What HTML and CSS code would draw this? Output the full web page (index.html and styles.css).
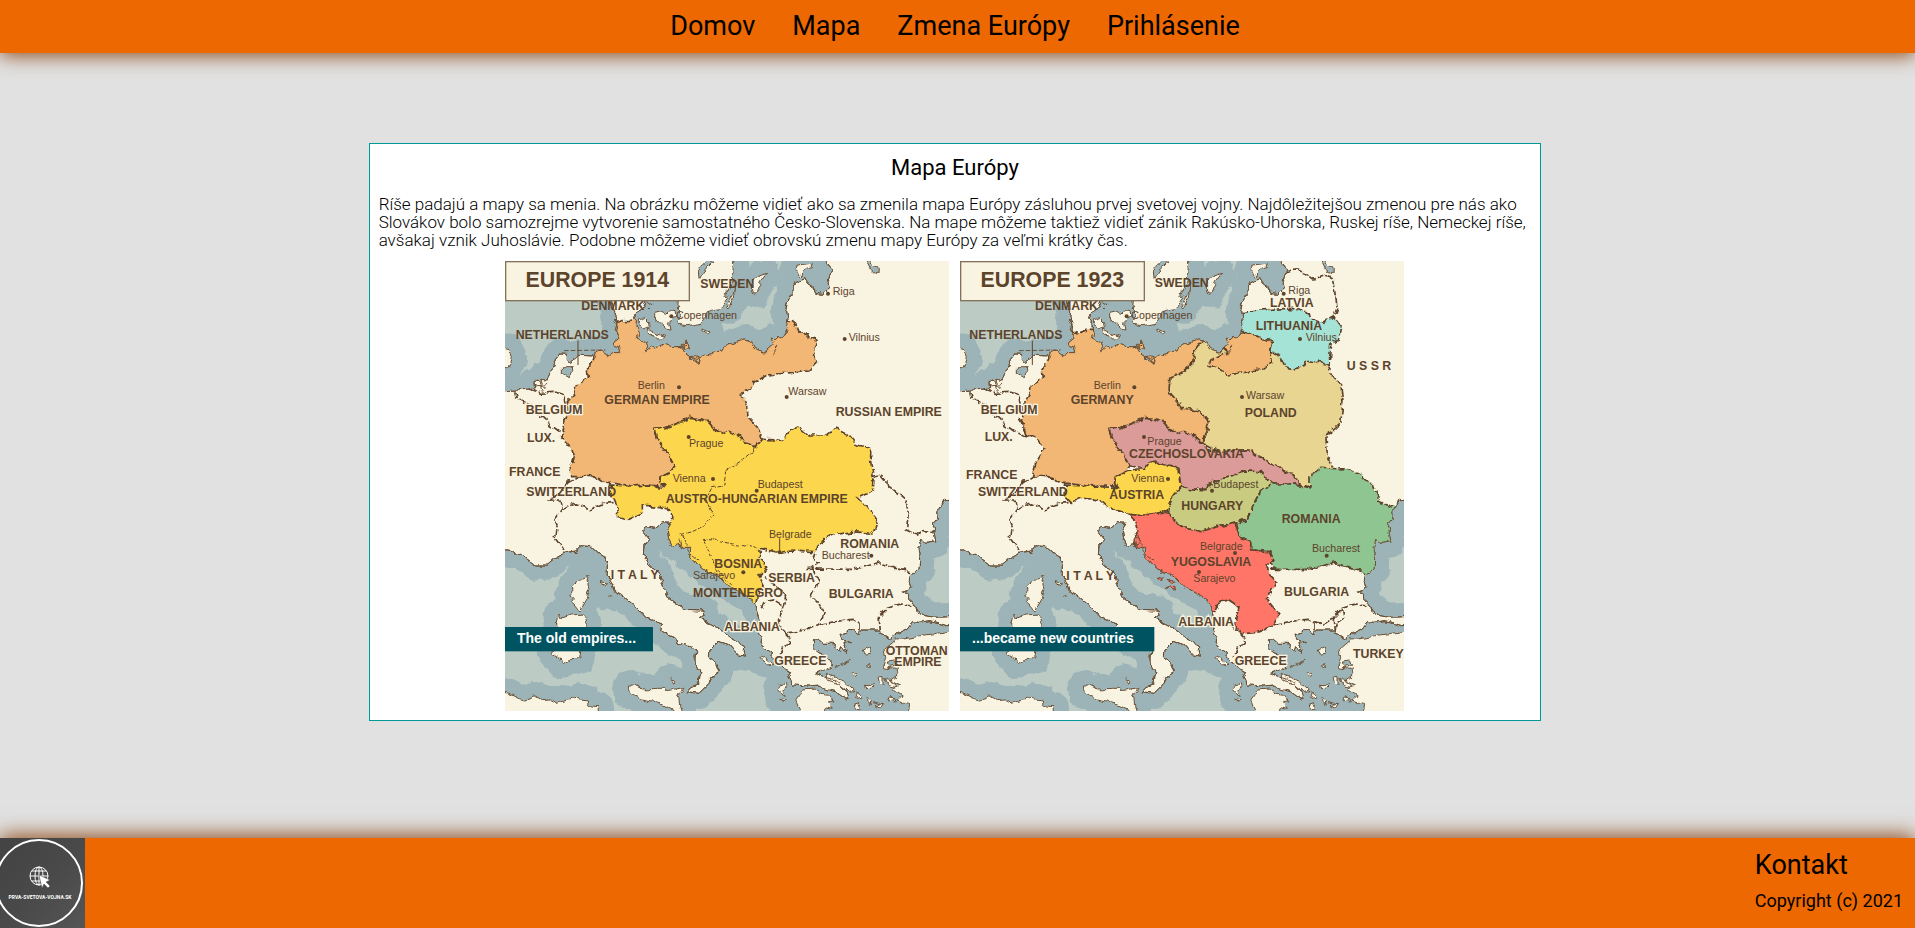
FILE: index.html
```html
<!DOCTYPE html>
<html lang="sk">
<head>
<meta charset="utf-8">
<meta name="viewport" content="width=device-width, initial-scale=1">
<title>Mapa Európy</title>
<link rel="stylesheet" href="styles.css">
</head>
<body>
<header class="site-header">
  <nav class="nav">
    <a href="#domov">Domov</a>
    <a href="#mapa">Mapa</a>
    <a href="#zmena">Zmena Európy</a>
    <a href="#prihlasenie">Prihlásenie</a>
  </nav>
</header>

<main class="content">
  <article class="card">
    <h1>Mapa Európy</h1>
    <p>Ríše padajú a mapy sa menia. Na obrázku môžeme vidieť ako sa zmenila mapa Európy zásluhou prvej svetovej vojny. Najdôležitejšou zmenou pre nás ako Slovákov bolo samozrejme vytvorenie samostatného Česko-Slovenska. Na mape môžeme taktiež vidieť zánik Rakúsko-Uhorska, Ruskej ríše, Nemeckej ríše, avšakaj vznik Juhoslávie. Podobne môžeme vidieť obrovskú zmenu mapy Európy za veľmi krátky čas.</p>
    <div class="maps">
      <svg class="map" viewBox="18 18 1332 1350" role="img" aria-label="Europe 1914">
        <defs>
          <filter id="rough" filterUnits="userSpaceOnUse" x="-20" y="-20" width="1410" height="1430">
            <feTurbulence type="fractalNoise" baseFrequency=".035" numOctaves="3" seed="4"/>
            <feDisplacementMap in="SourceGraphic" scale="20" xChannelSelector="R" yChannelSelector="G"/>
          </filter>
          <path id="mainland" d="M0 408L60 405L90 402L110 398L108 380L125 370L145 375L152 355L172 332L168 315L182 297L205 298L205 315L215 325L232 305L245 298L285 300L290 288L310 285L313 295L325 305L345 290L365 290L362 278L350 275L345 262L360 250L352 235L356 215L346 200L350 170L338 140L345 90L435 90L437 140L430 160L415 165L405 190L412 200L410 215L418 235L425 245L412 242L420 258L440 262L445 275L440 290L460 275L475 282L500 268L520 275L545 275L552 290L570 300L572 314L590 320L600 328L607 305L630 295L670 287L675 274L735 255L760 262L768 280L790 291L805 290L827 270L820 250L845 252L863 235L869 215L865 195L860 165L865 140L880 120L878 95L890 80L918 68L925 85L940 95L950 115L970 118L990 100L985 75L995 45L985 25L980 0L1380 0L1380 735L1335 737L1325 760L1313 770L1315 790L1303 805L1310 825L1305 835L1310 860L1285 865L1275 850L1263 855L1270 870L1260 880L1263 895L1260 945L1235 953L1231 975L1238 995L1225 1010L1208 1015L1228 1020L1230 1035L1250 1050L1255 1070L1275 1082L1315 1087L1380 1083L1380 1110L1340 1112L1310 1103L1290 1100L1265 1105L1240 1103L1225 1122L1198 1135L1175 1150L1145 1137L1145 1125L1115 1125L1080 1125L1080 1138L1060 1122L1045 1132L1020 1138L1030 1155L1055 1160L1035 1165L1048 1190L1025 1175L1020 1190L1000 1165L975 1165L958 1150L943 1160L945 1180L960 1195L985 1205L1000 1230L975 1245L950 1255L975 1265L1010 1275L1040 1310L1047 1335L1030 1325L1010 1310L975 1300L960 1290L925 1293L880 1290L870 1265L878 1252L860 1245L845 1235L830 1215L805 1185L780 1165L785 1145L775 1125L785 1105L778 1080L773 1060L770 1045L745 1025L715 1010L690 998L660 965L630 955L600 930L572 908L575 880L550 880L540 865L520 870L509 850L505 825L518 805L490 803L470 820L440 815L433 830L452 855L435 870L433 900L450 930L480 955L488 980L500 1020L525 1040L560 1063L612 1065L615 1080L600 1092L640 1110L675 1130L715 1160L740 1175L738 1203L715 1200L690 1170L660 1155L630 1185L628 1205L650 1220L662 1250L640 1265L630 1285L600 1315L562 1310L575 1295L600 1285L605 1255L590 1230L593 1185L560 1170L535 1165L530 1150L505 1140L485 1125L490 1105L460 1095L440 1087L415 1060L375 1025L345 1010L340 985L328 965L328 930L320 910L300 897L275 875L245 872L230 888L195 895L160 913L140 930L110 930L85 913L65 895L45 897L30 885L0 885Z"/>
          <path id="islands" d="M550 90L538 137L535 165L548 180L533 200L540 208L570 212L605 205L625 170L665 160L688 130L680 120L700 75L705 0L560 0ZM803 55L775 65L757 80L758 110L770 115L778 95L785 80ZM710 85L695 130L683 158L687 162L702 130ZM467 172L485 168L500 175L510 165L528 170L530 187L512 200L516 225L495 222L492 205L467 202ZM418 195L440 188L452 200L453 215L435 222L420 212ZM445 222L470 235L500 245L482 255L468 242L450 240ZM612 222L630 230L627 237L612 228ZM0 275L33 285L40 310L30 335L0 345ZM270 960L264 978L270 1000L262 1030L240 1068L225 1050L214 1040L224 1028L212 1020L222 1008L220 990L240 974L262 970ZM180 1075L186 1090L215 1080L255 1077L265 1095L262 1145L245 1190L242 1212L215 1210L190 1228L178 1208L158 1195L172 1185L182 1140L175 1105ZM385 1290L400 1290L430 1305L475 1303L510 1303L552 1295L538 1325L548 1380L520 1365L470 1340L430 1332L388 1315ZM0 1310L30 1315L60 1330L80 1335L110 1325L130 1337L155 1335L175 1345L205 1335L235 1330L265 1335L268 1352L300 1355L305 1400L0 1400ZM890 1335L910 1305L945 1302L965 1315L990 1318L1005 1338L985 1340L1000 1360L975 1355L970 1400L915 1400ZM1400 1122L1315 1135L1275 1140L1225 1150L1190 1155L1155 1185L1160 1205L1150 1235L1190 1240L1195 1260L1175 1275L1205 1290L1180 1300L1210 1320L1190 1335L1230 1345L1220 1400L1400 1400ZM895 30L940 25L940 38L920 45L905 62L890 45ZM300 980L325 984L318 990L303 985ZM330 1018L340 1020L335 1025ZM515 1270L530 1282L528 1288ZM785 1210L800 1205L825 1225L805 1227ZM845 1290L862 1285L865 1300L850 1305L855 1325L835 1300ZM842 1330L862 1335L855 1340ZM1090 1185L1110 1175L1115 1195L1095 1197ZM1060 1250L1080 1258L1070 1265ZM1100 1235L1112 1225L1108 1238ZM1100 1288L1125 1290L1115 1300ZM1075 1310L1085 1330L1070 1332ZM1105 1325L1120 1340L1108 1345ZM1140 1265L1155 1265L1155 1290L1145 1288ZM1165 1218L1190 1215L1195 1230L1170 1235ZM985 1255L1010 1265L1040 1285L1068 1310L1050 1312L1020 1290L985 1272ZM1160 1270L1180 1280L1195 1295L1170 1290ZM1165 1328L1178 1322L1182 1334L1168 1338ZM1062 1352L1080 1346L1088 1362L1070 1364ZM1128 1352L1150 1348L1142 1362Z"/>
          <path id="inland-water" d="M190 335L220 335L222 350L208 365L190 355ZM600 70L598 48L620 18L642 18L625 35L615 55ZM1100 18L1115 20L1122 35L1138 40L1137 55L1125 55L1112 42Z"/>
          <g id="west-borders">
            <path d="M50 408L55 430L85 445L110 475L140 490L150 510L185 535L205 537L208 510L195 490M90 402L125 415L165 412L195 422L197 440L205 470M205 675L202 690L172 725L148 735L183 735L190 760L165 795L175 820L168 850L195 885M190 760L230 747L270 762L310 745L355 742M202 687L240 665L275 668L305 663L328 685"/>
            <path d="M925 943L985 942L1060 943L1090 937L1140 920L1185 940L1235 950"/>
            <path d="M965 1108L1010 1100L1060 1093L1080 1105L1080 1125M1145 1135L1140 1085L1165 1060L1205 1047L1250 1050M860 1135L875 1150L855 1175L840 1205M790 1060L797 1040L825 1035L850 1050"/>
          </g>
          <path id="shore-marks" d="M355 205L348 225L358 240M115 375L140 400M110 390L145 385M120 372L130 410M1010 1238L1055 1215M540 275L565 270L560 262L570 285M572 305L605 312M580 315L600 322M445 140L460 150M440 155L450 165M545 835L560 845L558 875M540 850L548 880M560 880L600 915M820 295L840 272M845 252L870 215M1175 1320L1190 1345M1125 1340L1150 1350"/>
          <clipPath id="land-clip"><use href="#mainland"/></clipPath>
        </defs>
        <rect class="sea" x="18" y="18" width="1332" height="1350"/>
        <g filter="url(#rough)">
          <use class="shallow" href="#mainland"/>
          <use class="shallow" href="#islands"/>
          <use class="land" href="#mainland"/>
          <use class="land" href="#islands"/>
          <g class="border" clip-path="url(#land-clip)">
            <use href="#west-borders"/>
            <path class="germany" d="M350 205L375 197L395 196L410 190L440 190L440 250L540 240L690 245L765 240L845 230L860 220L865 195L880 197L890 205L900 230L930 240L957 262L943 300L955 318L930 345L875 353L805 360L770 380L730 422L745 460L747 485L770 510L787 550L770 573L735 560L715 540L675 540L650 525L630 500L600 492L572 487L545 500L500 518L467 523L480 560L510 600L528 632L515 650L485 665L482 685L495 695L480 693L450 690L400 693L345 685L325 685L300 668L280 665L215 665L213 650L227 605L220 585L185 545L193 510L205 480L205 440L225 420L227 395L268 365L265 345L285 310L280 280L340 260L340 230Z"/>
            <path class="austria" d="M467 523L500 518L545 500L572 487L600 492L630 500L650 525L675 540L685 527L715 540L735 560L770 573L790 550L850 553L875 530L900 517L930 540L985 540L1010 520L1050 540L1075 570L1115 580L1115 620L1122 660L1120 705L1115 710L1075 730L1105 750L1135 795L1120 835L1060 830L1000 840L960 865L950 890L880 885L840 893L785 880L780 910L805 937L780 965L795 995L780 1010L772 1050L740 1050L640 1000L560 930L500 880L495 825L515 805L515 765L480 755L430 750L430 775L390 793L360 785L355 755L345 730L330 715L335 690L400 693L450 690L490 698L495 690L482 685L485 665L515 650L528 632L510 600L480 560Z"/>
            <path class="thin" d="M765 573L763 590L720 625L680 645L675 690L640 695L620 735L640 775L610 815L580 830L545 840M610 853L650 855L690 865L750 875L785 885M610 853L630 890L655 950L700 995"/>
            <path d="M950 893L945 910L960 925L940 940L960 975L935 1025L960 1050L975 1075L965 1105L915 1125L860 1135L840 1105L850 1060L860 1025L825 985L795 965M1120 665L1145 658L1163 680L1165 690L1185 705L1220 735L1228 775L1222 825L1255 840L1270 830L1310 833"/>
          </g>
          <path class="islet germany" d="M548 270L562 258L570 278L552 284ZM572 305L590 302L605 310L600 320Z"/>
          <use class="coast" href="#mainland"/>
          <use class="water" href="#inland-water"/>
          <use class="coast" href="#shore-marks"/>
        </g>
        <path class="coast" d="M195 287L320 285" stroke-dasharray="14 6"/>
        <path class="tick" d="M237 257V330M842 850V892"/>
        <g class="halo">
          <text x="80" y="477">BELGIUM</text><text x="676" y="1128">ALBANIA</text>
          <text x="808" y="980">SERBIA</text><text x="826" y="1230">GREECE</text>
        </g>
        <g class="country">
          <text x="247" y="165">DENMARK</text><text x="604" y="99">SWEDEN</text>
          <text x="50" y="251">NETHERLANDS</text><text x="316" y="447">GERMAN EMPIRE</text>
          <text x="84" y="560">LUX.</text><text x="30" y="664">FRANCE</text>
          <text x="1010" y="484">RUSSIAN EMPIRE</text>
          <text x="82" y="723">SWITZERLAND</text><text x="500" y="743">AUSTRO-HUNGARIAN EMPIRE</text>
          <text x="335" y="972">I T A L Y</text><text x="646" y="938">BOSNIA</text>
          <text x="582" y="1027">MONTENEGRO</text><text x="1024" y="879">ROMANIA</text>
          <text x="989" y="1028">BULGARIA</text><text x="1160" y="1201">OTTOMAN</text><text x="1186" y="1234">EMPIRE</text>
        </g>
        <g class="city">
          <text x="531" y="191">Copenhagen</text><circle cx="517" cy="184" r="6"/>
          <text x="1001" y="120">Riga</text><circle cx="987" cy="116" r="6"/>
          <text x="1049" y="258">Vilnius</text><circle cx="1037" cy="252" r="6"/>
          <text x="416" y="402">Berlin</text><circle cx="540" cy="397" r="6"/>
          <text x="868" y="420">Warsaw</text><circle cx="863" cy="426" r="6"/>
          <text x="570" y="576">Prague</text><circle cx="569" cy="546" r="6"/>
          <text x="521" y="680">Vienna</text><circle cx="642" cy="672" r="6"/>
          <text x="776" y="699">Budapest</text><circle cx="773" cy="707" r="6"/>
          <text x="810" y="848">Belgrade</text><circle cx="842" cy="892" r="6"/>
          <text x="968" y="912">Bucharest</text><circle cx="1117" cy="902" r="6"/>
          <text x="582" y="972">Sarajevo</text><circle cx="733" cy="952" r="6"/>
        </g>
        <rect class="title-box" x="20" y="20" width="551" height="117"/>
        <text class="title" x="295" y="97">EUROPE 1914</text>
        <rect class="banner" x="18" y="1116" width="444" height="73"/>
        <text class="banner-text" x="54" y="1164">The old empires...</text>
      </svg>

      <svg class="map" viewBox="18 18 1332 1350" role="img" aria-label="Europe 1923">
        <rect class="sea" x="18" y="18" width="1332" height="1350"/>
        <g filter="url(#rough)">
          <use class="shallow" href="#mainland"/>
          <use class="shallow" href="#islands"/>
          <use class="land" href="#mainland"/>
          <use class="land" href="#islands"/>
          <g class="border" clip-path="url(#land-clip)">
            <use href="#west-borders"/>
            <path d="M990 55L1025 45L1050 55L1075 75L1100 72L1115 60L1135 68L1140 100L1150 155L1140 185M1105 18L1120 50"/>
            <path d="M1165 1060L1170 1090L1150 1105L1145 1130M1080 1100L1110 1107L1145 1085M205 540L240 545M860 1135L825 1105"/>
            <path class="poland" d="M750 255L785 235L825 300L975 290L1125 330L1135 360L1160 390L1167 440L1160 505L1115 540L1120 600L1135 642L1100 645L1070 665L1065 715L1040 690L1015 660L915 605L890 588L795 590L750 565L740 560L755 540L765 500L735 465L685 460L675 445L645 410L647 370L690 355L715 330L720 290Z"/>
            <path class="germany" d="M350 228L380 232L400 225L440 230L440 250L540 240L690 245L750 240L745 260L720 290L715 330L690 352L647 370L645 410L675 445L685 460L735 465L765 500L755 540L740 560L715 540L675 540L650 525L630 500L600 492L572 487L545 500L500 518L467 523L480 560L510 600L528 632L515 650L485 665L482 685L495 695L450 690L400 693L345 685L325 685L300 668L280 665L235 665L245 625L272 580L245 548L215 535L205 500L210 445L225 420L228 395L268 365L265 345L285 310L280 280L340 260Z"/>
            <path class="lithuania" d="M860 173L915 165L1015 160L1055 172L1075 190L1105 202L1140 185L1160 215L1153 255L1130 270L1125 330L1060 315L1050 335L1020 342L990 335L975 300L950 290L957 262L925 248L880 240L840 200Z"/>
            <path class="germany" d="M870 235L925 248L957 262L950 290L955 320L915 345L825 360L800 345L765 330L770 315L818 290L810 240Z"/>
            <path class="czech" d="M467 523L500 518L545 500L572 487L600 492L630 500L650 525L675 540L685 527L715 540L735 560L750 565L760 580L795 590L890 588L915 605L1015 660L1040 690L1030 687L965 688L930 670L920 650L865 648L835 665L805 670L765 690L760 705L715 705L680 695L675 640L630 630L600 618L570 645L528 632L510 600L480 560Z"/>
            <path class="austria" d="M570 645L590 618L630 630L672 642L680 690L655 725L640 770L570 780L520 775L470 760L440 735L385 730L350 742L330 720L335 690L400 693L490 698L482 685L485 665L515 650L550 645Z"/>
            <path class="hungary" d="M680 695L715 705L755 708L765 690L805 670L835 665L865 648L920 650L930 670L965 688L925 700L905 735L880 795L840 805L790 815L740 830L675 815L640 770L655 725Z"/>
            <path class="romania" d="M965 687L1020 687L1065 695L1065 665L1100 640L1185 642L1225 660L1255 690L1260 705L1275 740L1325 760L1360 760L1320 860L1280 955L1235 953L1185 940L1140 920L1090 937L1060 943L965 943L940 905L950 890L890 885L890 860L855 845L845 805L880 795L905 735L925 700Z"/>
            <path class="yugoslavia" d="M522 775L570 780L640 770L675 815L740 830L790 815L840 805L855 845L890 860L890 885L950 890L960 915L937 935L965 985L937 1035L975 1080L960 1110L915 1130L865 1137L845 1110L855 1055L825 1035L795 1040L785 1075L740 1060L560 930L535 870L555 835L545 800Z"/>
          </g>
          <path class="islet germany" d="M548 270L562 258L570 278L552 284ZM572 305L590 302L605 310L600 320Z"/>
          <path class="islet yugoslavia" d="M540 850L555 847L557 865L542 872ZM610 963L628 967L622 975ZM633 998L660 994L665 1002ZM635 975L660 978L655 986Z"/>
          <use class="coast" href="#mainland"/>
          <use class="water" href="#inland-water"/>
          <use class="coast" href="#shore-marks"/>
        </g>
        <path class="coast" d="M195 287L320 285" stroke-dasharray="14 6"/>
        <path class="tick" d="M235 257V330"/>
        <g class="halo">
          <text x="80" y="477">BELGIUM</text><text x="673" y="1112">ALBANIA</text>
          <text x="842" y="1230">GREECE</text>
        </g>
        <g class="country">
          <text x="243" y="165">DENMARK</text><text x="602" y="97">SWEDEN</text>
          <text x="46" y="251">NETHERLANDS</text><text x="350" y="447">GERMANY</text>
          <text x="92" y="557">LUX.</text><text x="36" y="672">FRANCE</text>
          <text x="948" y="156">LATVIA</text><text x="905" y="225">LITHUANIA</text>
          <text x="1178" y="345">U S S R</text><text x="872" y="485">POLAND</text>
          <text x="525" y="609">CZECHOSLOVAKIA</text><text x="72" y="723">SWITZERLAND</text>
          <text x="466" y="732">AUSTRIA</text><text x="682" y="765">HUNGARY</text>
          <text x="983" y="804">ROMANIA</text><text x="650" y="933">YUGOSLAVIA</text>
          <text x="337" y="974">I T A L Y</text><text x="990" y="1023">BULGARIA</text>
          <text x="1197" y="1208">TURKEY</text>
        </g>
        <g class="city">
          <text x="532" y="191">Copenhagen</text><circle cx="518" cy="184" r="6"/>
          <text x="1003" y="118">Riga</text><circle cx="989" cy="116" r="6"/>
          <text x="1055" y="258">Vilnius</text><circle cx="1038" cy="252" r="6"/>
          <text x="419" y="402">Berlin</text><circle cx="541" cy="397" r="6"/>
          <text x="876" y="432">Warsaw</text><circle cx="864" cy="426" r="6"/>
          <text x="580" y="571">Prague</text><circle cx="570" cy="546" r="6"/>
          <text x="532" y="680">Vienna</text><circle cx="642" cy="672" r="6"/>
          <text x="778" y="699">Budapest</text><circle cx="774" cy="707" r="6"/>
          <text x="738" y="884">Belgrade</text><circle cx="843" cy="894" r="6"/>
          <text x="1074" y="891">Bucharest</text><circle cx="1118" cy="902" r="6"/>
          <text x="718" y="980">Sarajevo</text><circle cx="735" cy="951" r="6"/>
        </g>
        <rect class="title-box" x="20" y="20" width="551" height="117"/>
        <text class="title" x="295" y="97">EUROPE 1923</text>
        <rect class="banner" x="18" y="1116" width="583" height="73"/>
        <text class="banner-text" x="54" y="1164">...became new countries</text>
      </svg>
    </div>
  </article>
</main>

<footer class="site-footer">
  <svg class="logo" viewBox="0 0 85 90" role="img" aria-label="prva-svetova-vojna.sk">
    <defs>
      <linearGradient id="slate" x1="0" y1="0" x2="1" y2="1">
        <stop offset="0" stop-color="#434343"/><stop offset=".5" stop-color="#494949"/><stop offset="1" stop-color="#555"/>
      </linearGradient>
    </defs>
    <rect width="85" height="90" fill="url(#slate)"/>
    <circle cx="39" cy="45" r="43" fill="none" stroke="#fff" stroke-width="2"/>
    <g fill="none" stroke="#fff">
      <circle cx="39" cy="38" r="9"/>
      <ellipse cx="39" cy="38" rx="4" ry="9"/>
      <path d="M39 29V47M30 38H48M32 33H46M32 43H46"/>
    </g>
    <path d="M39 37L50 42L46 44L50 48L48 50L44 46L42 50Z" fill="#fff" stroke="#484848" stroke-width=".5"/>
    <text class="logo-text" x="40" y="61">PRVA-SVETOVA-VOJNA.SK</text>
  </svg>
  <div class="contact">
    <h2>Kontakt</h2>
    <p>Copyright (c) 2021</p>
  </div>
</footer>
</body>
</html>
```
FILE: styles.css
```css
* {
  box-sizing: border-box;
}

body {
  margin: 0;
  min-height: 100vh;
  display: flex;
  flex-direction: column;
  background: #e1e1e1;
  color: #000;
  font-family: Roboto, "Liberation Sans", sans-serif;
}

h1, h2, p {
  margin: 0;
  font-weight: 400;
}

.site-header {
  padding: 10px 5px 11px 0;
  background: #ed6800;
  box-shadow: 0 2px 20px #8b4513;
}

.nav {
  display: flex;
  justify-content: center;
  gap: 37px;
}

.nav a {
  color: inherit;
  font-size: 27px;
  line-height: 32px;
  text-decoration: none;
}

.content {
  flex: 1;
  padding: 90px 5px 90px 0;
}

.card {
  width: 61.4%;
  margin: 0 auto;
  padding: 9px;
  background: #fff;
  border: 1px solid #009999;
}

.card h1 {
  font-size: 22px;
  line-height: 30px;
  text-align: center;
}

.card p {
  margin-top: 12px;
  font-size: 17px;
  font-weight: 300;
  line-height: 18px;
}

.maps {
  display: flex;
  justify-content: center;
  gap: 11px;
  margin-top: 12px;
}

.map {
  flex: 0 1 444px;
  min-width: 0;
  height: auto;
  font-family: "Liberation Sans", Arial, sans-serif;
}

.sea { fill: #bccbc4; }

.shallow {
  fill: #9cb4b7;
  stroke: #9cb4b7;
  stroke-width: 88;
  stroke-linejoin: round;
}

.land {
  fill: #f9f3e1;
  stroke: #6b5138;
  stroke-width: 3;
}

.coast {
  fill: none;
  stroke: #6b5138;
  stroke-width: 3;
}

.water {
  fill: #9cb4b7;
  stroke: #6b5138;
  stroke-width: 3;
}

.border {
  fill: none;
  stroke: #5c432b;
  stroke-width: 5;
  stroke-dasharray: 22 6;
}

.thin {
  stroke-width: 3;
  stroke-dasharray: 12 5;
}

.islet {
  stroke: #6b5138;
  stroke-width: 3;
}

.germany { fill: #f2b774; }
.austria { fill: #fcd74e; }
.poland { fill: #e8d592; }
.lithuania { fill: #a6e3d7; }
.czech { fill: #db9b98; }
.hungary { fill: #c9cb81; }
.romania { fill: #8fc591; }
.yugoslavia { fill: #ff7668; }

.country, .halo {
  fill: #5c432b;
  font-size: 37px;
  font-weight: 700;
}

.halo {
  paint-order: stroke;
  stroke: #f9f3e1;
  stroke-width: 8;
}

.city {
  fill: #5c432b;
  font-size: 32px;
}

.tick {
  stroke: #5c432b;
  stroke-width: 3;
}

.title-box {
  fill: #f9f3e1;
  stroke: #84725a;
  stroke-width: 4;
}

.title {
  fill: #5c432b;
  font-size: 64px;
  font-weight: 700;
  text-anchor: middle;
}

.banner { fill: #005461; }

.banner-text {
  fill: #fff;
  font-size: 42px;
  font-weight: 700;
}

.site-footer {
  display: flex;
  justify-content: space-between;
  background: #ed6800;
  box-shadow: 0 -2px 20px #8b4513;
}

.logo {
  flex: none;
  width: 85px;
  height: 90px;
}

.logo-text {
  fill: #fff;
  font-size: 5px;
  font-weight: 700;
  text-anchor: middle;
}

.contact {
  padding: 11px 12px 0 0;
}

.contact h2 {
  font-size: 27px;
  line-height: 32px;
}

.contact p {
  margin-top: 9px;
  font-size: 18px;
  line-height: 22px;
}
```
